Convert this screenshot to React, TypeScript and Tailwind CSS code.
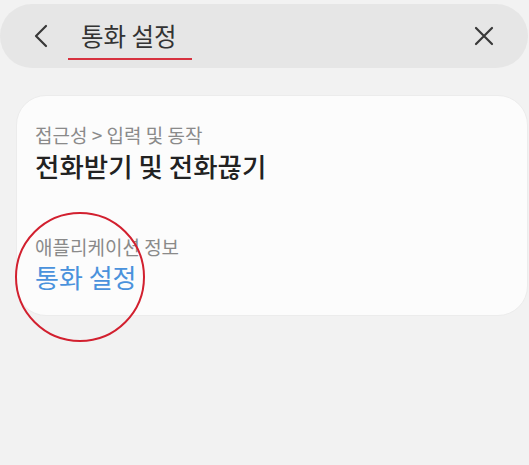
import React from 'react';

const font = { fontFamily: '"Noto Sans CJK KR", "Noto Sans", sans-serif' };

export default function App() {
  return (
    <div className="relative w-[529px] h-[465px] overflow-hidden bg-[#f2f2f2]" style={font}>
      {/* Search bar */}
      <div className="mt-[4px] w-[528px] h-[64px] rounded-full bg-[#e6e6e6] flex items-center">
        <svg className="ml-[32px] w-[18px] h-[24px]" viewBox="0 0 18 24" fill="none">
          <path d="M14 2 L4 12 L14 22" stroke="#383838" strokeWidth="2.2" strokeLinecap="round" strokeLinejoin="round" />
        </svg>
        <div className="relative ml-[31px] flex-1">
          <span className="text-[24.5px] leading-[30px] text-[#333]">통화 설정</span>
          <div className="absolute left-[-13px] top-[37px] w-[124px] h-[2px] bg-[#d7323f]" />
        </div>
        <svg className="mr-[34px] w-[20px] h-[20px]" viewBox="0 0 20 20" fill="none">
          <path d="M2 2 L18 18 M18 2 L2 18" stroke="#383838" strokeWidth="2.2" strokeLinecap="round" />
        </svg>
      </div>

      {/* Result card */}
      <div className="ml-[16px] mt-[27px] w-[512px] h-[221px] rounded-[30px] bg-[#fcfcfc] border border-[#ececec] pl-[18px] pt-[27px] flex flex-col">
        <div className="text-[19px] leading-[24px] text-[#8a8a8a]">접근성 &gt; 입력 및 동작</div>
        <div className="mt-[3px] text-[26.5px] leading-[32px] font-medium text-[#222]">전화받기 및 전화끊기</div>
        <div className="mt-[53px] text-[19px] leading-[24px] text-[#8a8a8a]">애플리케이션 정보</div>
        <div className="mt-[2px] text-[26px] leading-[32px] text-[#4a92dc]">통화 설정</div>
      </div>

      {/* Red annotation circle */}
      <div className="absolute left-[15px] top-[212px] w-[130px] h-[130px] rounded-full border-2 border-[#d2202f]" />
    </div>
  );
}
